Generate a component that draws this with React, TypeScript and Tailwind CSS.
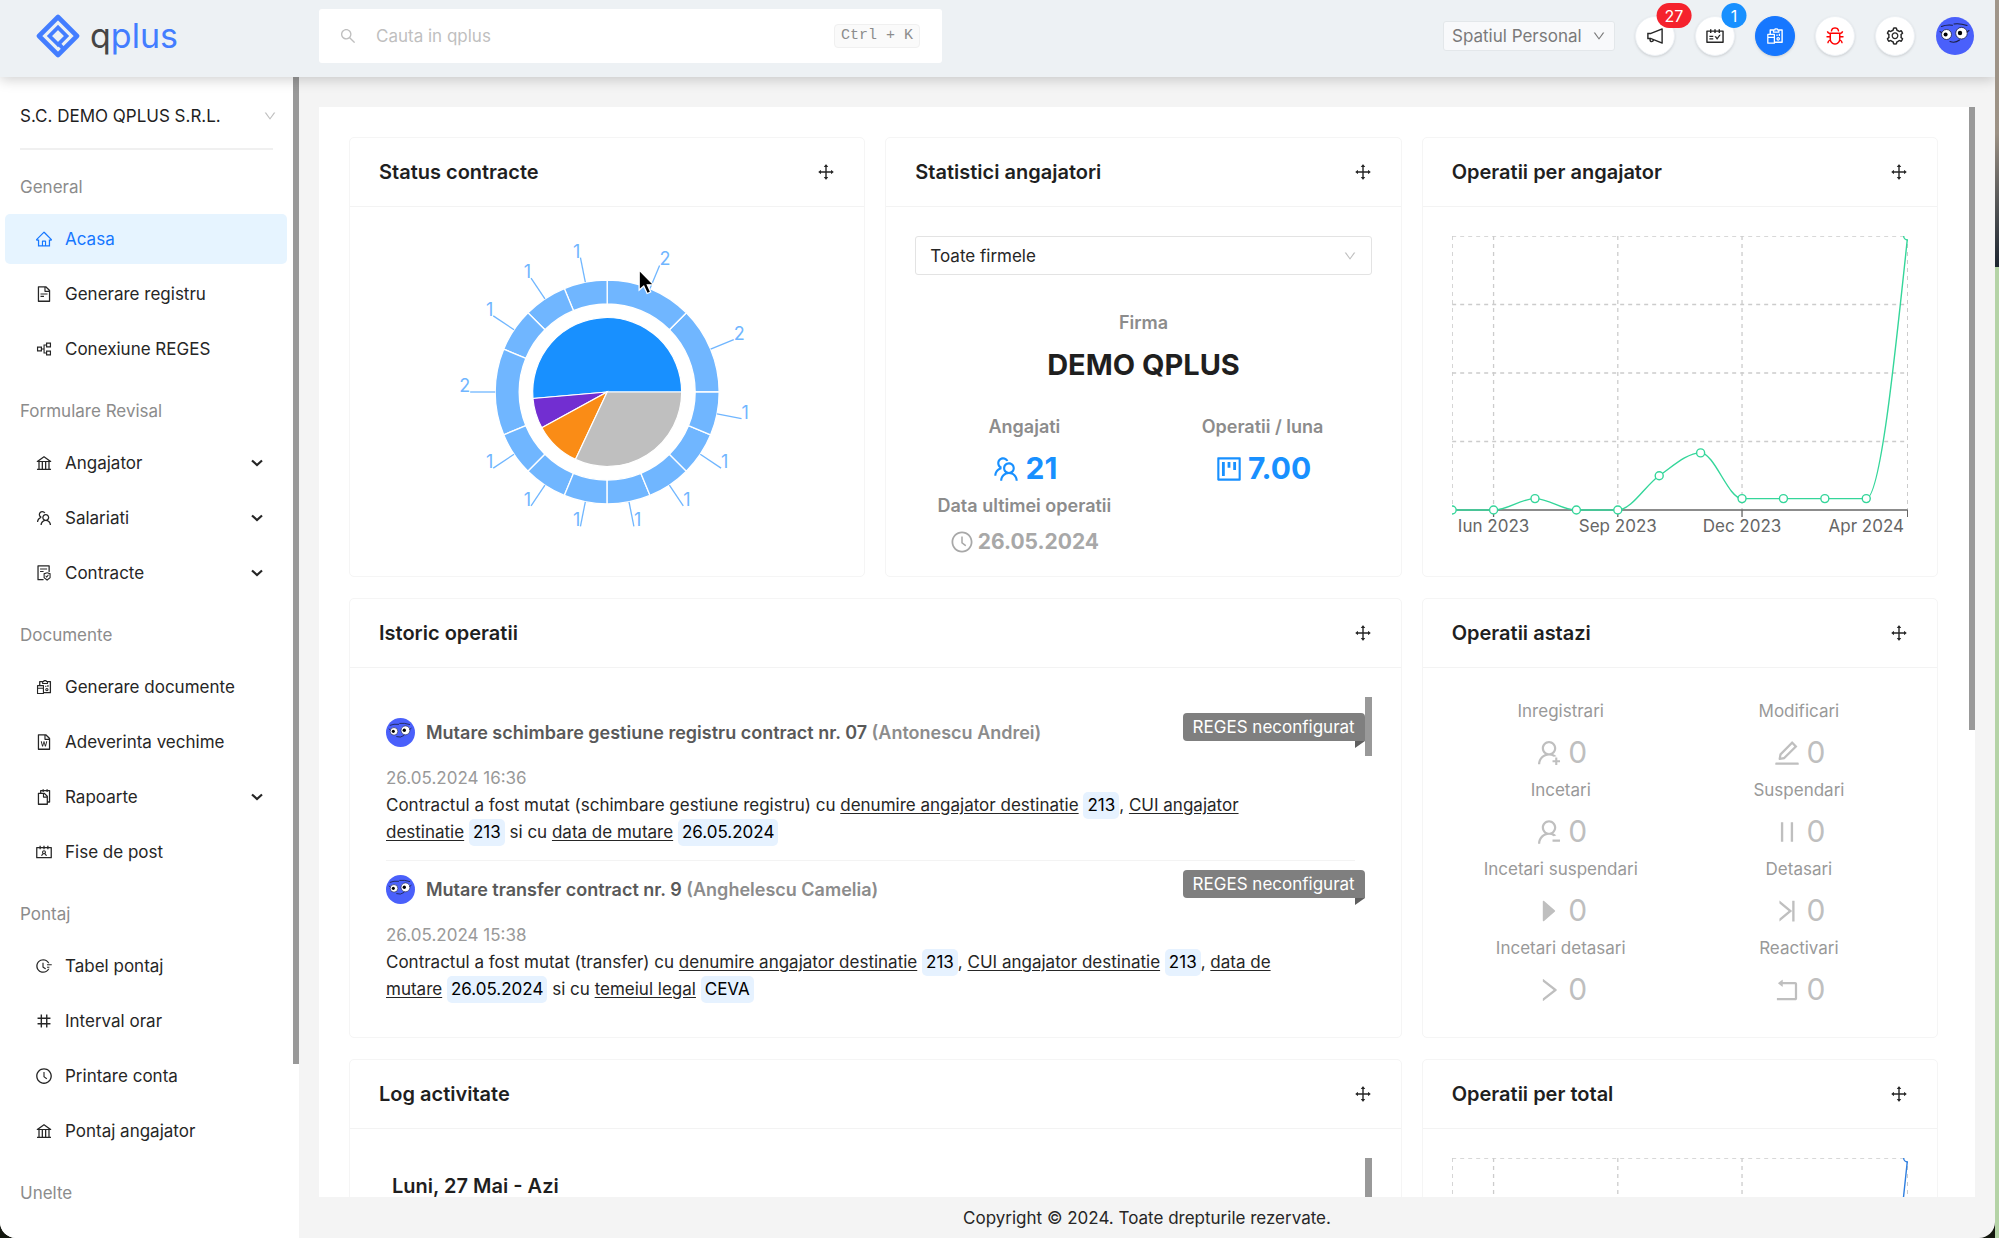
import type { ReactNode } from "react";
import {
  AiOutlineBank,
  AiOutlineBug,
  AiOutlineClockCircle,
  AiOutlineContacts,
  AiOutlineDown,
  AiOutlineDrag,
  AiOutlineEdit,
  AiOutlineFieldTime,
  AiOutlineFileProtect,
  AiOutlineFileText,
  AiOutlineFileWord,
  AiOutlineHome,
  AiOutlineNotification,
  AiOutlineNumber,
  AiOutlinePartition,
  AiOutlinePause,
  AiOutlineProject,
  AiOutlineReconciliation,
  AiOutlineRight,
  AiOutlineRollback,
  AiOutlineSchedule,
  AiOutlineSearch,
  AiOutlineSetting,
  AiOutlineSnippets,
  AiOutlineTeam,
  AiOutlineUserAdd,
  AiOutlineUserDelete,
  AiOutlineVerticalLeft,
  AiFillCaretRight,
} from "react-icons/ai";
import type { IconType } from "react-icons";

type MenuItem = { label: string; icon: IconType; active?: boolean; submenu?: boolean };
type MenuGroup = { title: string; items: MenuItem[] };

const menu: MenuGroup[] = [
  {
    title: "General",
    items: [
      { label: "Acasa", icon: AiOutlineHome, active: true },
      { label: "Generare registru", icon: AiOutlineFileText },
      { label: "Conexiune REGES", icon: AiOutlinePartition },
    ],
  },
  {
    title: "Formulare Revisal",
    items: [
      { label: "Angajator", icon: AiOutlineBank, submenu: true },
      { label: "Salariati", icon: AiOutlineTeam, submenu: true },
      { label: "Contracte", icon: AiOutlineFileProtect, submenu: true },
    ],
  },
  {
    title: "Documente",
    items: [
      { label: "Generare documente", icon: AiOutlineReconciliation },
      { label: "Adeverinta vechime", icon: AiOutlineFileWord },
      { label: "Rapoarte", icon: AiOutlineSnippets, submenu: true },
      { label: "Fise de post", icon: AiOutlineContacts },
    ],
  },
  {
    title: "Pontaj",
    items: [
      { label: "Tabel pontaj", icon: AiOutlineFieldTime },
      { label: "Interval orar", icon: AiOutlineNumber },
      { label: "Printare conta", icon: AiOutlineClockCircle },
      { label: "Pontaj angajator", icon: AiOutlineBank },
    ],
  },
  { title: "Unelte", items: [] },
];

function Logo() {
  return (
    <a href="#" className="flex items-center gap-[10px]">
      <svg viewBox="0 0 44 44" className="size-11" fill="none" stroke="#437dff" strokeLinejoin="round" aria-hidden="true">
        <path d="M22 3 L41 22 L22 41 L3 22 Z" strokeWidth="4.6" />
        <path d="M22 30.5 L13.5 22 L22 13.5 L30.5 22 Z" strokeWidth="3.8" strokeLinejoin="miter" />
        <path d="M22.5 29.5 L28 35.5" strokeWidth="4" />
      </svg>
      <span className="text-[34px] leading-10 text-[#437dff]">
        <span className="text-[#454545]">q</span>plus
      </span>
    </a>
  );
}

function Avatar({ className }: { className: string }) {
  return (
    <svg viewBox="0 0 38 38" className={className} role="img" aria-label="Avatar">
      <circle cx="19" cy="19" r="19" fill="#4a60fb" />
      <circle cx="10.5" cy="17.5" r="5" fill="#fff" stroke="#1d2145" strokeWidth="0.8" />
      <circle cx="25.5" cy="16.2" r="5.8" fill="#fff" stroke="#1d2145" strokeWidth="0.8" />
      <circle cx="9.6" cy="17.5" r="2" fill="#000" />
      <circle cx="24" cy="16" r="2.2" fill="#000" />
      <path d="M5.5 9.5 Q10 7.5 16.5 8.2 M18 7 Q24 6.2 31 8.5 M31 15 L33 13.5 M4 14.5 L5.5 15.5" stroke="#1d2145" strokeWidth="1.1" fill="none" strokeLinecap="round" />
      <path d="M14 24.5 Q19 26.5 23.5 23" stroke="#1d2145" strokeWidth="1.1" fill="none" strokeLinecap="round" />
    </svg>
  );
}

function RoundButton({
  label,
  icon: Icon,
  badge,
  badgeClass = "",
  className = "border-[#edf1f5] bg-white text-[#262626]",
}: {
  label: string;
  icon: IconType;
  badge?: string;
  badgeClass?: string;
  className?: string;
}) {
  return (
    <button type="button" aria-label={label} className={`relative flex size-10 items-center justify-center rounded-full border shadow-sm ${className}`}>
      <Icon className="size-5" />
      {badge && (
        <span className={`absolute left-full -top-[14px] flex h-[25px] min-w-[25px] -translate-x-1/2 items-center justify-center rounded-full px-2 text-base leading-none text-white ${badgeClass}`}>
          {badge}
        </span>
      )}
    </button>
  );
}

function Header() {
  return (
    <header className="relative z-10 flex h-[77px] shrink-0 items-start bg-[#edf1f4] shadow-[0_3px_12px_rgba(0,0,0,0.18)]">
      <div className="flex h-[72px] w-[319px] shrink-0 items-center pl-9">
        <Logo />
      </div>
      <label className="mt-[9px] flex h-[54px] w-[623px] items-center rounded-[3px] bg-white pl-5 pr-[22px]">
        <AiOutlineSearch className="size-[18px] text-[#bfbfbf]" />
        <input type="text" placeholder="Cauta in qplus" aria-label="Cauta in qplus" className="ml-[19px] min-w-0 flex-1 bg-transparent outline-none placeholder:text-[#bfbfbf]" />
        <kbd className="rounded-[4px] border border-[#f0f0f0] bg-[#fafafa] px-[6px] font-[Liberation_Mono,monospace] text-[15px] leading-[22px] text-[#8c8c8c]">
          Ctrl + K
        </kbd>
      </label>
      <div className="ml-auto flex h-[72px] items-center gap-5 pr-5">
        <label className="relative flex h-[30px] items-center rounded-[3px] border border-[#e3e7ea] bg-[#f8f9fb] text-[#7a7a7a]">
          <select aria-label="Spatiu" className="w-[170px] appearance-none bg-transparent pl-2 outline-none">
            <option>Spatiul Personal</option>
          </select>
          <AiOutlineDown className="pointer-events-none absolute right-2 size-[14px]" />
        </label>
        <RoundButton label="Notificari" icon={AiOutlineNotification} badge="27" badgeClass="bg-[#f5222d]" />
        <RoundButton label="Calendar" icon={AiOutlineSchedule} badge="1" badgeClass="bg-[#1890ff]" />
        <RoundButton label="Documente" icon={AiOutlineReconciliation} className="border-[#1677ff] bg-[#1677ff] text-white" />
        <RoundButton label="Raporteaza o problema" icon={AiOutlineBug} className="border-[#edf1f5] bg-white text-[#ff0000]" />
        <RoundButton label="Setari" icon={AiOutlineSetting} />
        <button type="button" aria-label="Cont" className="flex size-10 items-center justify-center">
          <Avatar className="size-[38px]" />
        </button>
      </div>
    </header>
  );
}

function Sidebar() {
  return (
    <aside className="relative w-[299px] shrink-0 overflow-hidden bg-white">
      <div className="ml-5 mr-[26px] flex h-[73px] items-center border-b-2 border-[#f0f0f0] pt-[6px]">
        <label className="relative flex w-full items-center">
          <select aria-label="Firma" className="w-full appearance-none bg-transparent text-[#1f1f1f] outline-none">
            <option>S.C. DEMO QPLUS S.R.L.</option>
          </select>
          <AiOutlineDown className="pointer-events-none absolute -right-1 size-[14px] text-[#bfbfbf]" />
        </label>
      </div>
      <nav className="pt-[13px]">
        {menu.map((group) => (
          <section key={group.title} className="mb-[13px]">
            <h2 className="flex h-[47px] items-center pl-5 text-[#8c8c8c]">{group.title}</h2>
            {group.items.length > 0 && (
              <ul className="mt-1 flex flex-col gap-[5px] pl-[5px] pr-3">
                {group.items.map(({ label, icon: Icon, active, submenu }) => (
                  <li key={label}>
                    <a
                      href="#"
                      className={`flex h-[50px] items-center gap-3 rounded-[5px] pl-[30px] pr-6 ${active ? "bg-[#e6f4ff] text-[#1677ff]" : "text-[#262626]"}`}
                    >
                      <Icon className="size-[18px]" />
                      <span>{label}</span>
                      {submenu && (
                        <svg viewBox="0 0 12 8" className="ml-auto h-2 w-3" fill="none" stroke="currentColor" strokeWidth="2.2" aria-hidden="true">
                          <path d="M1 1.5 L6 6 L11 1.5" />
                        </svg>
                      )}
                    </a>
                  </li>
                ))}
              </ul>
            )}
          </section>
        ))}
      </nav>
      <div className="absolute right-0 top-0 h-[85%] w-[6px] bg-[#999]" aria-hidden="true" />
    </aside>
  );
}

function Card({ title, wide, children }: { title: string; wide?: boolean; children: ReactNode }) {
  return (
    <section className={`rounded-[5px] border border-[#f5f5f5] bg-white ${wide ? "col-span-2" : ""}`}>
      <div className="flex h-[69px] items-center justify-between border-b border-[#f3f3f3] pl-[29px] pr-7">
        <h3 className="text-xl font-semibold text-[#1f1f1f]">{title}</h3>
        <button type="button" aria-label={`Muta ${title}`} className="text-[#262626]">
          <AiOutlineDrag className="size-5" />
        </button>
      </div>
      <div className="px-[29px] pb-[30px] pt-[29px]">
        <div className="relative h-[310px]">{children}</div>
      </div>
    </section>
  );
}

const CX = 228;
const CY = 156;
const polar = (r: number, deg: number) => {
  const a = (deg * Math.PI) / 180;
  return [CX + r * Math.cos(a), CY - r * Math.sin(a)] as const;
};

function sector(r0: number, r1: number, from: number, to: number) {
  const large = to - from > 180 ? 1 : 0;
  const [x1, y1] = polar(r1, from);
  const [x2, y2] = polar(r1, to);
  const [x3, y3] = polar(r0, to);
  const [x4, y4] = polar(r0, from);
  return `M${x1} ${y1} A${r1} ${r1} 0 ${large} 0 ${x2} ${y2} L${x3} ${y3} A${r0} ${r0} 0 ${large} 1 ${x4} ${y4} Z`;
}

const innerSlices = [
  { from: 0, to: 185, color: "#1890ff" },
  { from: 185, to: 208.7, color: "#722ed1" },
  { from: 208.7, to: 244.8, color: "#fa8c16" },
  { from: 244.8, to: 360, color: "#bfbfbf" },
];
const ringValues = [2, 2, 1, 1, 1, 2, 1, 1, 1, 1, 1, 1, 1];

function StatusChart() {
  let angle = 0;
  const ring = ringValues.map((value) => {
    const from = angle;
    angle += value * 22.5;
    return { value, from, to: angle, mid: (from + angle) / 2 };
  });
  return (
    <svg viewBox="0 0 456 310" className="h-full w-full" role="img" aria-label="Status contracte">
      {innerSlices.map((s) => (
        <path key={s.color} d={sector(0, 74.5, s.from, s.to)} fill={s.color} stroke="#fff" strokeWidth="1.2" />
      ))}
      {ring.map((s) => {
        const [x1, y1] = polar(112, s.mid);
        const [x2, y2] = polar(137, s.mid);
        const right = x2 > CX;
        return (
          <g key={s.from}>
            <path d={sector(88, 112, s.from, s.to)} fill="#70b6ff" stroke="#fff" strokeWidth="1.3" />
            <line x1={x1} y1={y1} x2={x2} y2={y2} stroke="#70b6ff" strokeWidth="1.3" />
            <text x={x2} y={y2} textAnchor={right ? "start" : "end"} fill="#70b6ff" fontSize="18">
              {s.value}
            </text>
          </g>
        );
      })}
      <path d="M260 34 V54 L264.6 50 L268 57.5 L271.5 56 L268.2 48.8 H274.5 Z" fill="#000" stroke="#fff" strokeWidth="1.3" />
    </svg>
  );
}

const series = [0, 0, 1, 0, 0, 3, 5, 1, 1, 1, 1, 24];
const STEP = 455.5 / 11;

function monotonePath(points: { x: number; y: number }[]) {
  const n = points.length;
  const slope = points.slice(1).map((p, i) => (p.y - points[i].y) / (p.x - points[i].x));
  const tangent = points.map((_, i) => {
    if (i === 0 || i === n - 1) return 0;
    const a = slope[i - 1];
    const b = slope[i];
    if (a * b <= 0) return 0;
    return Math.sign(a) * Math.min(Math.abs(a), Math.abs(b), Math.abs(a + b) / 4) * 2;
  });
  tangent[0] = (3 * slope[0] - tangent[1]) / 2;
  tangent[n - 1] = (3 * slope[n - 2] - tangent[n - 2]) / 2;
  let d = `M${points[0].x} ${points[0].y}`;
  for (let i = 1; i < n; i++) {
    const h = (points[i].x - points[i - 1].x) / 3;
    d += ` C${points[i - 1].x + h} ${points[i - 1].y + h * tangent[i - 1]} ${points[i].x - h} ${points[i].y - h * tangent[i]} ${points[i].x} ${points[i].y}`;
  }
  return d;
}

function LineChart({ color, label }: { color: string; label: string }) {
  const points = series.map((v, i) => ({ x: i * STEP, y: 274 - (v * 274) / 24 }));
  const ticks = [1, 4, 7, 11];
  return (
    <svg viewBox="0 0 456 310" className="h-full w-full" role="img" aria-label={label}>
      <g stroke="#ccc" strokeWidth="1.3" strokeDasharray="4 4">
        {[0, 68.5, 137, 205.5].map((y) => (
          <line key={y} x1="0" y1={y} x2="455.5" y2={y} />
        ))}
        {[0, 1, 4, 7, 11].map((i) => (
          <line key={i} x1={i * STEP} y1="0" x2={i * STEP} y2="274" />
        ))}
      </g>
      <line x1="0" y1="274" x2="455.5" y2="274" stroke="#666" strokeWidth="1.3" />
      {ticks.map((i) => (
        <line key={i} x1={i * STEP} y1="274" x2={i * STEP} y2="281" stroke="#666" strokeWidth="1.3" />
      ))}
      <g fill="#666" fontSize="17" textAnchor="middle">
        <text x={STEP} y="296">Iun 2023</text>
        <text x={STEP * 4} y="296">Sep 2023</text>
        <text x={STEP * 7} y="296">Dec 2023</text>
        <text x={STEP * 10} y="296">Apr 2024</text>
      </g>
      <path d={monotonePath(points)} fill="none" stroke={color} strokeWidth="1.4" />
      {points.map((p) => (
        <circle key={p.x} cx={p.x} cy={p.y} r="4" fill="#fff" stroke={color} strokeWidth="1.4" />
      ))}
    </svg>
  );
}

type Tone = "dark" | "blue" | "muted" | "plain";

const valueTone: Record<Tone, string> = {
  dark: "text-[29px] leading-[47px] font-bold text-[#1f1f1f]",
  blue: "text-[30px] leading-[47px] font-bold text-[#1890ff]",
  muted: "text-[21px] leading-9 font-bold text-[#a8a8a8]",
  plain: "text-[30px] leading-[47px] text-[#bfbfbf]",
};

function Stat({ title, icon: Icon, value, tone = "plain" }: { title: string; icon?: IconType; value: string; tone?: Tone }) {
  return (
    <div className="flex flex-col items-center">
      <div className={`mb-1 leading-7 ${tone === "plain" ? "text-[#999]" : "text-lg/7 font-semibold text-[#8c8c8c]"}`}>{title}</div>
      <div className={`flex items-center gap-1 ${valueTone[tone]}`}>
        {Icon && <Icon className={tone === "muted" ? "size-6" : "size-[30px]"} />}
        <span>{value}</span>
      </div>
    </div>
  );
}

const today = [
  { title: "Inregistrari", icon: AiOutlineUserAdd },
  { title: "Modificari", icon: AiOutlineEdit },
  { title: "Incetari", icon: AiOutlineUserDelete },
  { title: "Suspendari", icon: AiOutlinePause },
  { title: "Incetari suspendari", icon: AiFillCaretRight },
  { title: "Detasari", icon: AiOutlineVerticalLeft },
  { title: "Incetari detasari", icon: AiOutlineRight },
  { title: "Reactivari", icon: AiOutlineRollback },
];

function Tag({ children }: { children: ReactNode }) {
  return <span className="inline-block rounded-[5px] bg-[#e6f2ff] px-1 leading-[27px] text-black">{children}</span>;
}

function Field({ children }: { children: ReactNode }) {
  return <u className="underline-offset-2">{children}</u>;
}

function HistoryItem({ title, person, date, children }: { title: string; person: string; date: string; children: ReactNode }) {
  return (
    <li className="relative border-b border-[#f3f3f3] py-[14px]">
      <div className="flex items-center gap-[11px]">
        <Avatar className="size-[29px]" />
        <h4 className="text-lg/7 font-semibold text-[#595959]">
          {title} <span className="text-[#8c8c8c]">({person})</span>
        </h4>
      </div>
      <div className="mt-[18px] leading-[27px]">
        <time className="text-[#999]">{date}</time>
        <p className="mr-[50px] text-[#262626]">{children}</p>
      </div>
      <div className="absolute -right-[10px] top-[9px]">
        <div className="rounded-[4px] rounded-br-none bg-[#7f7f7f] px-[10px] leading-7 text-white">REGES neconfigurat</div>
        <svg viewBox="0 0 10 7" className="absolute right-0 top-full h-[7px] w-[10px]" aria-hidden="true">
          <path d="M0 0 H10 L0 7 Z" fill="#5f5f5f" />
        </svg>
      </div>
    </li>
  );
}

function Dashboard() {
  return (
    <div className="grid grid-cols-3 gap-x-5 gap-y-[21px]">
      <Card title="Status contracte">
        <StatusChart />
      </Card>
      <Card title="Statistici angajatori">
        <label className="relative flex h-[39px] items-center rounded-[3px] border border-[#e3e3e3]">
          <select aria-label="Firma" className="w-full appearance-none bg-transparent pl-[14px] text-[#262626] outline-none">
            <option>Toate firmele</option>
          </select>
          <AiOutlineDown className="pointer-events-none absolute right-[14px] size-[14px] text-[#bfbfbf]" />
        </label>
        <div className="mt-[34px]">
          <Stat title="Firma" value="DEMO QPLUS" tone="dark" />
        </div>
        <div className="-mx-[10px] mt-[25px] grid grid-cols-2">
          <Stat title="Angajati" icon={AiOutlineTeam} value="21" tone="blue" />
          <Stat title="Operatii / luna" icon={AiOutlineProject} value="7.00" tone="blue" />
          <Stat title="Data ultimei operatii" icon={AiOutlineClockCircle} value="26.05.2024" tone="muted" />
        </div>
      </Card>
      <Card title="Operatii per angajator">
        <LineChart color="#34d69a" label="Operatii per angajator" />
      </Card>
      <Card title="Istoric operatii" wide>
        <ul className="h-full overflow-hidden pl-[7px] pr-[17px] pt-[7px]">
          <HistoryItem title="Mutare schimbare gestiune registru contract nr. 07" person="Antonescu Andrei" date="26.05.2024 16:36">
            Contractul a fost mutat (schimbare gestiune registru) cu <Field>denumire angajator destinatie</Field> <Tag>213</Tag>,{" "}
            <Field>CUI angajator destinatie</Field> <Tag>213</Tag> si cu <Field>data de mutare</Field> <Tag>26.05.2024</Tag>
          </HistoryItem>
          <HistoryItem title="Mutare transfer contract nr. 9" person="Anghelescu Camelia" date="26.05.2024 15:38">
            Contractul a fost mutat (transfer) cu <Field>denumire angajator destinatie</Field> <Tag>213</Tag>, <Field>CUI angajator destinatie</Field>{" "}
            <Tag>213</Tag>, <Field>data de mutare</Field> <Tag>26.05.2024</Tag> si cu <Field>temeiul legal</Field> <Tag>CEVA</Tag>
          </HistoryItem>
        </ul>
        <div className="absolute right-0 top-0 h-[59px] w-[7px] bg-[#999]" aria-hidden="true" />
      </Card>
      <Card title="Operatii astazi">
        <div className="-mx-[10px] grid grid-cols-2">
          {today.map((t) => (
            <Stat key={t.title} title={t.title} icon={t.icon} value="0" />
          ))}
        </div>
      </Card>
      <Card title="Log activitate" wide>
        <h4 className="pl-[13px] pt-[14px] text-xl font-semibold text-[#1f1f1f]">Luni, 27 Mai - Azi</h4>
        <div className="absolute right-0 top-0 h-[59px] w-[7px] bg-[#999]" aria-hidden="true" />
      </Card>
      <Card title="Operatii per total">
        <LineChart color="#2f7fe0" label="Operatii per total" />
      </Card>
    </div>
  );
}

export default function App() {
  return (
    <div className="flex h-screen overflow-hidden bg-[#14180f] font-[Inter,sans-serif] text-[17px] leading-7">
      <div className="flex min-w-0 flex-1 flex-col overflow-hidden rounded-b-[16px] bg-[#f4f4f4]">
        <Header />
        <div className="flex min-h-0 flex-1">
          <Sidebar />
          <div className="flex min-w-0 flex-1 flex-col">
            <main className="relative ml-5 mr-5 mt-[30px] min-h-0 flex-1 overflow-hidden bg-white pl-[30px] pr-[37px] pt-[30px]">
              <Dashboard />
              <div className="absolute right-0 top-0 h-4/7 w-[6px] bg-[#999]" aria-hidden="true" />
            </main>
            <footer className="flex h-[41px] shrink-0 items-center justify-center text-[#262626]">Copyright © 2024. Toate drepturile rezervate.</footer>
          </div>
        </div>
      </div>
      <div className="flex w-1 shrink-0 flex-col" aria-hidden="true">
        <div className="h-[267px] bg-linear-to-b from-[#a0968a] via-[#9c9184] to-[#1d2630]" />
        <div className="flex-1 bg-[#b4d3a6]" />
      </div>
    </div>
  );
}
